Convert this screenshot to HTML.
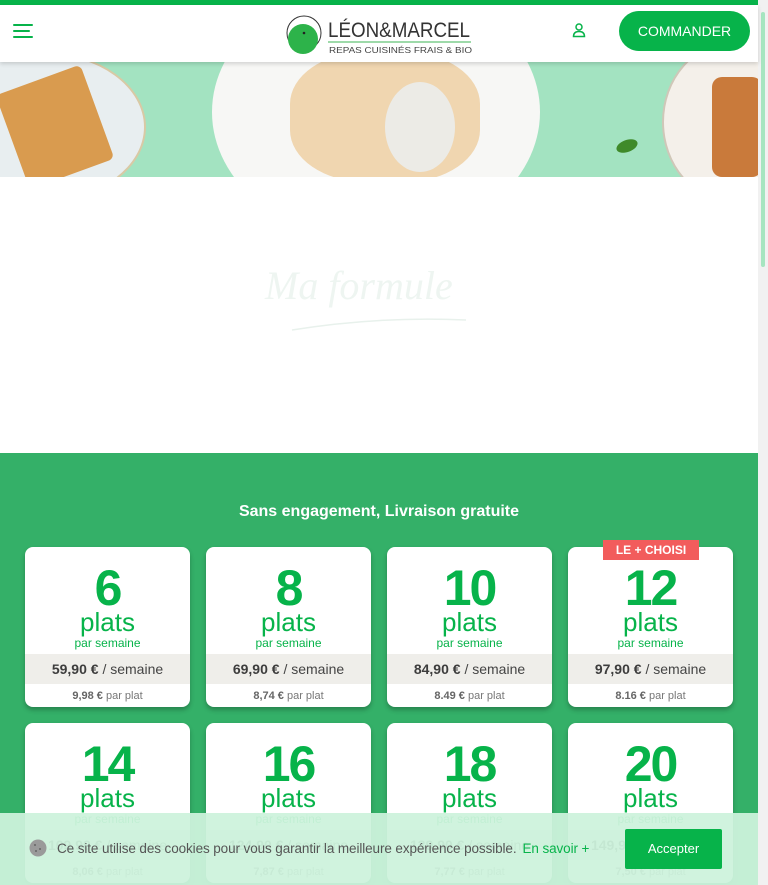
<!DOCTYPE html>
<html><head><meta charset="utf-8"><style>
*{margin:0;padding:0;box-sizing:border-box}
body{width:768px;height:885px;overflow:hidden;font-family:"Liberation Sans",sans-serif;background:#fff;position:relative}
.top{position:absolute;left:0;top:0;width:758px;height:5px;background:#07b34a}
.hdr{position:absolute;left:0;top:5px;width:758px;height:57px;background:#fff;box-shadow:0 2px 4px rgba(0,0,0,.15);z-index:2}
.burger{position:absolute;left:13px;top:19px}
.burger i{display:block;height:2px;background:#07b34a;margin-bottom:4px;border-radius:1px}
.logo{position:absolute;left:286px;top:8px}
.cmd{position:absolute;left:619px;top:6px;width:131px;height:40px;border-radius:20px;background:#07b34a;color:#fff;font-size:14px;line-height:40px;text-align:center}
.hero{position:absolute;left:0;top:62px;width:758px;height:115px;background:#a3e3c1;overflow:hidden}
.sb{position:absolute;left:758px;top:0;width:10px;height:885px;background:#f1f1f1}
.sb i{position:absolute;left:3px;top:12px;width:4px;height:255px;background:#a6e5c0;border-radius:2px}
.green{position:absolute;left:0;top:453px;width:758px;height:432px;background:#34b068}
.title{position:absolute;top:503px;left:0;width:758px;text-align:center;color:#fff;font-weight:bold;font-size:16px}
.card{position:absolute;width:165px;height:160px;background:#fff;border-radius:8px;box-shadow:0 3px 5px rgba(0,0,0,.25);text-align:center;color:#07b34a;overflow:hidden}
.n{font-size:50px;font-weight:bold;line-height:50px;margin-top:16px;letter-spacing:-2px}
.p{font-size:26px;line-height:26px;margin-top:-4px}
.s{font-size:12px;margin-top:1px}
.band{background:#efeeea;height:30px;line-height:30px;color:#444;font-size:14px;margin-top:4px}
.band b{color:#3d3d3d}
.pp{color:#777;font-size:11px;line-height:24px}
.pp b{color:#666}
.badge{position:absolute;left:603px;top:540px;width:96px;height:20px;background:#f25c5c;color:#fff;font-size:12px;font-weight:bold;text-align:center;line-height:20px;z-index:3}
.cookie{position:absolute;left:0;top:813px;width:758px;height:72px;background:rgba(205,242,220,.94);z-index:5}
.ctext{position:absolute;left:57px;top:28px;font-size:13.5px;color:#555;letter-spacing:-.1px}
.ctext span{color:#07b34a;margin-left:6px}
.acc{position:absolute;left:625px;top:16px;width:97px;height:40px;background:#07b34a;color:#fff;font-size:13px;line-height:40px;text-align:center;border-radius:2px}
</style></head><body>
<div class="top"></div>
<div class="hdr">
 <div class="burger"><i style="width:20px"></i><i style="width:17px"></i><i style="width:20px"></i></div>
 <svg class="logo" width="190" height="44" viewBox="0 0 190 44">
  <circle cx="18" cy="20" r="17" fill="#fff" stroke="#333" stroke-width="1"/>
  <circle cx="17" cy="26" r="15" fill="#2db34a"/>
  <circle cx="18" cy="20" r="1.3" fill="#222"/>
  <text x="42" y="24" font-family="Liberation Sans" font-size="21" fill="#333" textLength="142" lengthAdjust="spacingAndGlyphs">LÉON&amp;MARCEL</text>
  <line x1="42" y1="29" x2="185" y2="29" stroke="#3cb554" stroke-width="1"/>
  <text x="43" y="40" font-family="Liberation Sans" font-size="8.5" fill="#444" textLength="143" lengthAdjust="spacingAndGlyphs">REPAS CUISINÉS FRAIS &amp; BIO</text>
 </svg>
 <svg style="position:absolute;left:572px;top:17px" width="14" height="16" viewBox="0 0 14 16" fill="none" stroke="#07b34a" stroke-width="1.5"><circle cx="7" cy="5" r="3"/><path d="M1.5 14.5 Q1.5 9.5 7 9.5 Q12.5 9.5 12.5 14.5 Z"/></svg>
 <div class="cmd">COMMANDER</div>
</div>
<div class="hero">
 <div style="position:absolute;left:-60px;top:-10px;width:206px;height:150px;border-radius:50%;background:#e8eef0;border:2px solid #d9c9a5"></div>
 <div style="position:absolute;left:10px;top:15px;width:90px;height:100px;background:#d99b4f;transform:rotate(-20deg);border-radius:6px"></div>
 <div style="position:absolute;left:212px;top:-80px;width:328px;height:260px;border-radius:50%;background:#f7f7f5"></div>
 <div style="position:absolute;left:290px;top:-10px;width:190px;height:130px;border-radius:40%;background:#f0d6b0"></div>
 <div style="position:absolute;left:385px;top:20px;width:70px;height:90px;border-radius:50%;background:#ecebe6"></div>
 <div style="position:absolute;left:662px;top:-20px;width:140px;height:160px;border-radius:50%;background:#f4f0ea;border:2px solid #cfc7b8"></div>
 <div style="position:absolute;left:712px;top:15px;width:50px;height:100px;background:#c97a3b;border-radius:10px"></div>
 <div style="position:absolute;left:616px;top:78px;width:22px;height:12px;background:#3f8a2a;border-radius:50%;transform:rotate(-20deg)"></div>
</div>
<div style="position:absolute;left:265px;top:262px;font-family:'Liberation Serif',serif;font-style:italic;font-size:40px;color:#eef5f1">Ma formule</div>
<svg style="position:absolute;left:290px;top:312px" width="180" height="22"><path d="M2 18 Q90 4 176 8" fill="none" stroke="#e8f1ec" stroke-width="1.5"/></svg>
<div class="sb"><i></i></div>
<div class="green"></div>
<div class="title">Sans engagement, Livraison gratuite</div>
<div class="badge">LE + CHOISI</div>
<div class="card" style="left:25px;top:547px"><div class="n">6</div><div class="p">plats</div><div class="s">par semaine</div><div class="band"><b>59,90 €</b> / semaine</div><div class="pp"><b>9,98 €</b> par plat</div></div>
<div class="card" style="left:206px;top:547px"><div class="n">8</div><div class="p">plats</div><div class="s">par semaine</div><div class="band"><b>69,90 €</b> / semaine</div><div class="pp"><b>8,74 €</b> par plat</div></div>
<div class="card" style="left:387px;top:547px"><div class="n">10</div><div class="p">plats</div><div class="s">par semaine</div><div class="band"><b>84,90 €</b> / semaine</div><div class="pp"><b>8.49 €</b> par plat</div></div>
<div class="card" style="left:568px;top:547px"><div class="n">12</div><div class="p">plats</div><div class="s">par semaine</div><div class="band"><b>97,90 €</b> / semaine</div><div class="pp"><b>8.16 €</b> par plat</div></div>
<div class="card" style="left:25px;top:723px"><div class="n">14</div><div class="p">plats</div><div class="s">par semaine</div><div class="band"><b>109,90 €</b> / semaine</div><div class="pp"><b>8,06 €</b> par plat</div></div>
<div class="card" style="left:206px;top:723px"><div class="n">16</div><div class="p">plats</div><div class="s">par semaine</div><div class="band"><b>124,90 €</b> / semaine</div><div class="pp"><b>7,87 €</b> par plat</div></div>
<div class="card" style="left:387px;top:723px"><div class="n">18</div><div class="p">plats</div><div class="s">par semaine</div><div class="band"><b>139,90 €</b> / semaine</div><div class="pp"><b>7,77 €</b> par plat</div></div>
<div class="card" style="left:568px;top:723px"><div class="n">20</div><div class="p">plats</div><div class="s">par semaine</div><div class="band"><b>149,90 €</b> / semaine</div><div class="pp"><b>7,50 €</b> par plat</div></div>
<div class="cookie">
 <svg style="position:absolute;left:29px;top:26px" width="18" height="18" viewBox="0 0 18 18"><circle cx="9" cy="9" r="8.5" fill="#9a9a9a"/><circle cx="6" cy="6" r="1" fill="#666"/><circle cx="11" cy="10" r="1" fill="#666"/><circle cx="7" cy="12" r="1" fill="#666"/></svg>
 <div class="ctext">Ce site utilise des cookies pour vous garantir la meilleure expérience possible.<span>En savoir +</span></div>
 <div class="acc">Accepter</div>
</div>
</body></html>
